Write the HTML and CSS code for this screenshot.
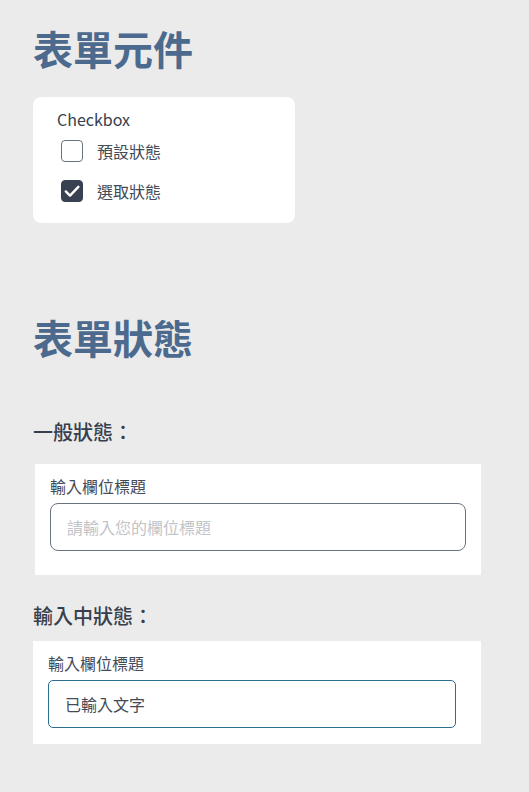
FILE: index.html
```html
<!DOCTYPE html>
<html lang="zh-Hant">
<head>
<meta charset="utf-8">
<title>表單元件</title>
<link rel="stylesheet" href="styles.css">
</head>
<body>
<main class="page">
  <h1 class="title title-first">表單元件</h1>
  <section class="card">
    <div class="legend">Checkbox</div>
    <label class="check-row">
      <span class="checkbox"></span>
      <span class="check-label">預設狀態</span>
    </label>
    <label class="check-row">
      <span class="checkbox checked">
        <svg viewBox="0 0 22 22" width="22" height="22"><path d="M4.8 11.4 L9 15.6 L17.4 6.8" fill="none" stroke="#fff" stroke-width="2.4" stroke-linecap="round" stroke-linejoin="round"/></svg>
      </span>
      <span class="check-label">選取狀態</span>
    </label>
  </section>

  <h1 class="title title-second">表單狀態</h1>

  <h2 class="state-heading state-normal">一般狀態：</h2>
  <div class="field-box field-normal">
    <div class="field-label">輸入欄位標題</div>
    <div class="input">
      <span class="placeholder">請輸入您的欄位標題</span>
    </div>
  </div>

  <h2 class="state-heading state-typing">輸入中狀態：</h2>
  <div class="field-box field-typing">
    <div class="field-label">輸入欄位標題</div>
    <div class="input input-active">
      <span class="value">已輸入文字</span>
    </div>
  </div>
</main>
</body>
</html>
```
FILE: styles.css
```css
* { box-sizing: border-box; }
html, body { margin: 0; padding: 0; }
body {
  background: #ebebeb;
  font-family: "Noto Sans CJK TC", "Noto Sans", sans-serif;
  color: #3a4350;
}
.page {
  padding: 24px 0 0 33px;
  width: 529px;
}
.title {
  margin: 0;
  font-size: 40px;
  line-height: 48px;
  font-weight: 700;
  color: #4b6a8e;
}
.title-first { margin-bottom: 25px; }
.title-second { margin-top: 90px; }

.card {
  width: 262px;
  background: #fff;
  border-radius: 8px;
  padding: 10px 0 12px 24px;
}
.legend {
  font-size: 16px;
  line-height: 24px;
  color: #36404d;
}
.check-row {
  display: flex;
  align-items: center;
  height: 40px;
  padding-left: 4px;
  gap: 14px;
}
.checkbox {
  width: 22px;
  height: 22px;
  border: 1.5px solid #6b7380;
  border-radius: 4px;
  background: #fff;
  display: flex;
  align-items: center;
  justify-content: center;
}
.checkbox.checked {
  background: #374151;
  border-color: #374151;
}
.checkbox.checked svg { display: block; flex: none; }
.check-label {
  font-size: 16px;
  line-height: 24px;
  color: #434b57;
}

.state-heading {
  margin: 0;
  font-size: 20px;
  line-height: 28px;
  font-weight: 500;
  color: #36404d;
}
.state-normal { margin-top: 57px; margin-bottom: 18px; }
.state-typing { margin-top: 27px; margin-bottom: 11px; }

.field-box { background: #fff; }
.field-normal {
  width: 446px;
  margin-left: 2px;
  padding: 10px 15px 24px 15px;
}
.field-typing {
  width: 448px;
  padding: 10px 25px 16px 15px;
}
.field-label {
  font-size: 16px;
  line-height: 24px;
  color: #434b57;
  margin-bottom: 5px;
}
.input {
  height: 48px;
  border: 1px solid #6b7380;
  border-radius: 8px;
  display: flex;
  align-items: center;
  padding-left: 16px;
  font-size: 16px;
}
.input-active { border-color: #2c6e92; border-radius: 5px; }
.placeholder { color: #c2c4c8; }
.value { color: #434b57; }
```
